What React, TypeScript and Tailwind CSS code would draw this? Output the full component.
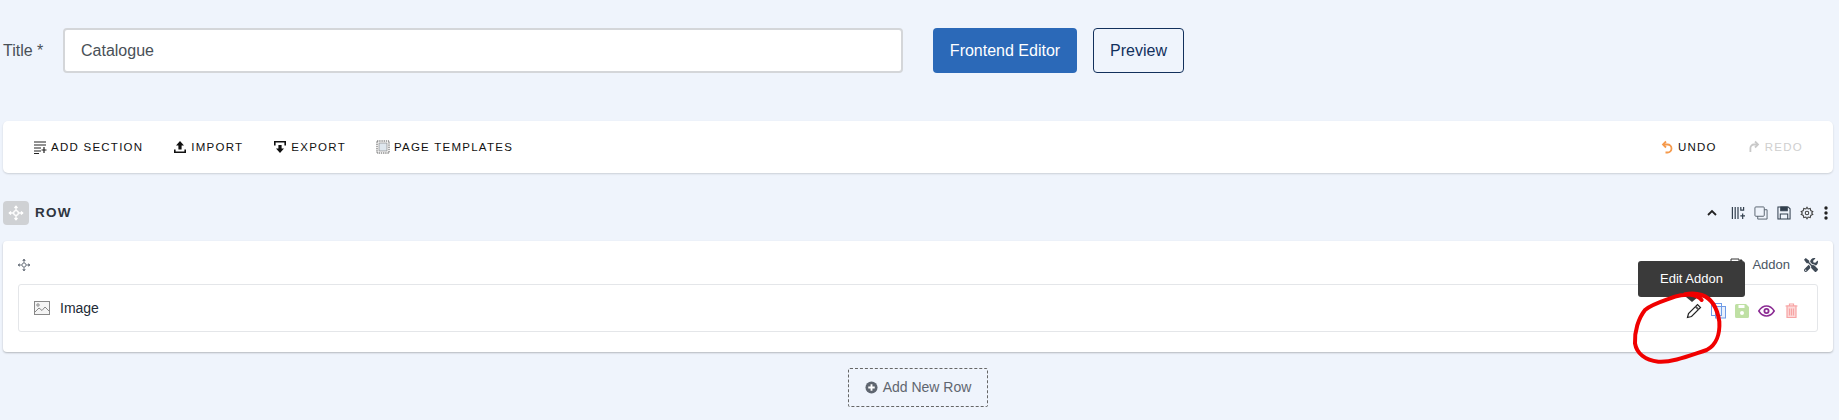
import React from "react";
import { FaTools } from "react-icons/fa";

const sans = "font-['Liberation_Sans',Arial,sans-serif]";

function MoveIcon({ size, color, stroke = 1.6 }: { size: number; color: string; stroke?: number }) {
  return (
    <svg width={size} height={size} viewBox="0 0 24 24" fill="none" stroke={color} strokeWidth={stroke}>
      <circle cx="12" cy="12" r="3.5" />
      <path d="M12 8.5V2M12 15.5V22M8.5 12H2M15.5 12H22" />
      <path d="M9.8 4.500 12 2l2.200 2.500M9.800 19.500 12 22l2.200-2.500M4.500 9.800 2 12l2.500 2.200M19.500 9.800 22 12l-2.500 2.200" fill={color} />
    </svg>
  );
}

function ToolbarItem({ icon, label, className }: { icon: React.ReactNode; label: string; className?: string }) {
  return (
    <div className={`flex items-center gap-[4px] ${className ?? ""}`}>
      {icon}
      <span className="pt-[1px] text-[11.5px] leading-none tracking-[1.25px]">{label}</span>
    </div>
  );
}

export default function App() {
  return (
    <div className={`relative h-[420px] w-[1839px] overflow-hidden bg-[#eff4fc] ${sans}`}>
      {/* Title row */}
      <div className="h-[28px]" />
      <div className="flex h-[45px] items-center pl-[3px]">
        <label className="w-[60px] text-[16px] text-[#495057]">Title *</label>
        <div className="flex h-[45px] w-[840px] items-center rounded-[4px] border-2 border-[#d4d6d9] bg-white pl-[16px] text-[16px] text-[#495057]">
          Catalogue
        </div>
        <button className="ml-[30px] h-[45px] w-[144px] rounded-[4px] bg-[#2b69b8] text-[16px] text-white">Frontend Editor</button>
        <button className="ml-[16px] h-[45px] w-[91px] rounded-[4px] border border-[#12305c] text-[16px] text-[#12305c]">Preview</button>
      </div>

      {/* Toolbar */}
      <div className="ml-[3px] mr-[6px] mt-[48px] flex h-[52px] items-center justify-between rounded-[5px] bg-white pl-[30px] pr-[30px] text-[#111] shadow-[0_1px_2px_rgba(0,0,0,0.15)]">
        <div className="flex items-center gap-[30px]">
          <ToolbarItem
            label="ADD SECTION"
            icon={
              <svg width="14" height="14" viewBox="0 0 14 14" fill="none" stroke="#222" strokeWidth="1.2">
                <path d="M1 2h12M1 5h12M1 8h7M1 11h7M1 13.500h5M11 7v6M8.500 10h5" />
              </svg>
            }
          />
          <ToolbarItem
            label="IMPORT"
            icon={
              <svg width="14" height="14" viewBox="0 0 14 14" fill="#111">
                <path d="M7 1 11 5.500H8.600V9.500H5.400V5.500H3Z" />
                <path d="M1 9.500h1.600v2h8.800v-2H13v3.500H1Z" />
              </svg>
            }
          />
          <ToolbarItem
            label="EXPORT"
            icon={
              <svg width="14" height="14" viewBox="0 0 14 14" fill="#111">
                <path d="M7 13 11 8.500H8.600V5H5.400V8.500H3Z" />
                <path d="M1 1h12v4.500h-1.600V2.600H2.600v2.900H1Z" />
              </svg>
            }
          />
          <ToolbarItem
            label="PAGE TEMPLATES"
            icon={
              <svg width="14" height="14" viewBox="0 0 14 14" fill="none">
                <rect x="1" y="1" width="12" height="12" stroke="#555" strokeDasharray="1.400 0.800" />
                <rect x="3" y="3" width="8" height="8" fill="#dfe7ee" stroke="#888" strokeWidth="0.7" />
              </svg>
            }
          />
        </div>
        <div className="flex items-center gap-[30px]">
          <ToolbarItem
            label="UNDO"
            icon={
              <svg width="14" height="14" viewBox="0 0 14 14" fill="none" stroke="#f59a4c" strokeWidth="1.8">
                <path d="M6 1.500 3 4.500l3 3" />
                <path d="M3 4.500h4.500a3.600 3.600 0 0 1 0 8H5.500" />
              </svg>
            }
          />
          <ToolbarItem
            className="text-[#cfcfcf]"
            label="REDO"
            icon={
              <svg width="14" height="14" viewBox="0 0 14 14" fill="none" stroke="#c9c9c9" strokeWidth="1.8">
                <path d="M8 1.500 11 4.500l-3 3" />
                <path d="M11 4.500H7a3.600 3.600 0 0 0-3.600 3.600v4" />
              </svg>
            }
          />
        </div>
      </div>

      {/* Row header */}
      <div className="ml-[3px] mr-[6px] mt-[28px] flex h-[24px] items-center justify-between">
        <div className="flex items-center">
          <div className="flex h-[24px] w-[26px] items-center justify-center rounded-[4px] bg-[#cfd1d4]">
            <MoveIcon size={16} color="#ffffff" stroke={2} />
          </div>
          <span className="ml-[6px] text-[13.5px] font-bold tracking-[1.3px] text-[#2f3640]">ROW</span>
        </div>
        <div className="mr-[5px] flex items-center gap-[9px]">
          <svg width="14" height="14" viewBox="0 0 14 14" fill="none" stroke="#222" strokeWidth="1.8" className="mr-[3px]">
            <path d="M3 9l4-4 4 4" />
          </svg>
          <svg width="14" height="14" viewBox="0 0 15 15" fill="none" stroke="#33404f" strokeWidth="1.3">
            <path d="M1.500 1v13M4.500 1v13M7.500 1v13M10.500 1v3.500h3V1M10 10.500h5M12.500 8v6" />
          </svg>
          <svg width="14" height="14" viewBox="0 0 15 15" fill="none" stroke="#55606c" strokeWidth="1">
            <rect x="1" y="1" width="10" height="10" rx="1" />
            <path d="M11 4h3v10H4v-3" />
          </svg>
          <svg width="14" height="14" viewBox="0 0 15 15" fill="none" stroke="#33404f" strokeWidth="1.1">
            <path d="M1 1h11l2 2v11H1Z" />
            <path d="M4 1h7v4H4Z" fill="#33404f" />
            <path d="M3.500 14V8.500h8V14" />
          </svg>
          <svg width="14" height="14" viewBox="0 0 24 24" fill="none" stroke="#444" strokeWidth="1.8">
            <circle cx="12" cy="12" r="3" />
            <path d="M12 2l2 3 3.600-.8.800 3.600 3.600 2-2 2.200 2 2.200-3.600 2-.8 3.600L14 19l-2 3-2-3-3.600.8-.8-3.600-3.600-2 2-2.200-2-2.200 3.600-2 .8-3.600L10 5Z" />
          </svg>
          <svg width="4" height="14" viewBox="0 0 4 14" fill="#222" className="ml-[1px]">
            <circle cx="2" cy="2" r="1.700" />
            <circle cx="2" cy="7" r="1.700" />
            <circle cx="2" cy="12" r="1.700" />
          </svg>
        </div>
      </div>

      {/* Card */}
      <div className="ml-[3px] mr-[6px] mt-[16px] h-[111px] rounded-[4px] bg-white px-[15px] shadow-[0_1px_2px_rgba(0,0,0,0.25)]">
        <div className="flex h-[43px] items-center justify-between pt-[5px]">
          <div className="ml-[-1px]"><MoveIcon size={14} color="#5c6470" stroke={1.4} /></div>
          <div className="flex items-center">
            <svg width="14" height="14" viewBox="0 0 14 14" fill="none" stroke="#333" strokeWidth="1" className="mr-[8px]">
              <path d="M9 1H1v12h12V5M9 1v12M11 1v3M9.500 2.500h3" />
            </svg>
            <span className="text-[13px] text-[#4a5563]">Addon</span>
            <FaTools className="ml-[14px] text-[14px] text-[#3f4a56]" />
          </div>
        </div>
        <div className="flex h-[48px] items-center justify-between rounded-[3px] border border-[#e4e6e9] pl-[15px] pr-[19px]">
          <div className="flex items-center">
            <svg width="16" height="14" viewBox="0 0 16 14" fill="none" stroke="#888">
              <rect x="0.500" y="0.500" width="15" height="13" fill="#f4f4f4" />
              <circle cx="4" cy="4" r="1.200" />
              <path d="M1 11l4-4 3 2.500L11 6l4 4" />
            </svg>
            <span className="ml-[10px] text-[14px] text-[#222b36]">Image</span>
          </div>
          <div className="flex items-center gap-[9px] pt-[5px]">
            <svg width="16" height="16" viewBox="0 0 16 16" fill="none">
              <path d="M1.500 14.500 2.500 10.500 11.500 1.500 14.500 4.500 5.500 13.500Z" fill="#fff" stroke="#222" strokeWidth="1.200" />
              <path d="M9.500 3.500l3 3" stroke="#555" strokeWidth="1.800" />
            </svg>
            <svg width="15" height="16" viewBox="0 0 15 16" fill="none" stroke="#6f9be6" strokeWidth="1">
              <rect x="4.500" y="3.500" width="10" height="11.500" fill="#e9f0fc" />
              <rect x="0.500" y="0.500" width="10" height="12" />
            </svg>
            <svg width="14" height="14" viewBox="0 0 14 14">
              <path d="M0 1.500A1.500 1.500 0 0 1 1.500 0h9.500L14 3v9.500a1.500 1.500 0 0 1-1.500 1.500h-11A1.500 1.500 0 0 1 0 12.500Z" fill="#bfe0a4" />
              <rect x="3.500" y="1" width="6" height="3" fill="#fff" />
              <circle cx="7" cy="9" r="2" fill="#fff" />
            </svg>
            <svg width="17" height="12" viewBox="0 0 17 12" fill="none">
              <path d="M0.800 6C3 2.500 5.500 1 8.500 1s5.500 1.500 7.700 5c-2.200 3.500-4.700 5-7.700 5S3 9.500 0.800 6Z" stroke="#8b2b93" strokeWidth="1.500" />
              <circle cx="8.500" cy="6" r="3" fill="#8b2b93" />
              <circle cx="8.500" cy="6" r="1.200" fill="#fff" />
            </svg>
            <svg width="13" height="15" viewBox="0 0 13 15" fill="none" stroke="#f7a4a4" strokeWidth="1.200" className="ml-[1px]">
              <path d="M0.500 3h12M4.500 3V1h4v2" />
              <path d="M2 3h9v11.500H2z" fill="#fcd9d9" />
              <path d="M4.500 5.500v7M6.500 5.500v7M8.500 5.500v7" />
            </svg>
          </div>
        </div>
      </div>

      {/* Add New Row */}
      <div className="mt-[16px] flex justify-center">
        <button className="ml-[-3px] flex h-[39px] w-[140px] items-center justify-center gap-[5px] rounded-[2px] border border-dashed border-[#666] text-[14px] text-[#5f6670]">
          <svg width="13" height="13" viewBox="0 0 14 14">
            <circle cx="7" cy="7" r="6.500" fill="#5f6670" />
            <path d="M7 3.500v7M3.500 7h7" stroke="#fff" strokeWidth="2" />
          </svg>
          Add New Row
        </button>
      </div>

      {/* Tooltip */}
      <div className="absolute left-[1638px] top-[261px] flex h-[36px] w-[107px] items-center justify-center rounded-[3px] bg-[#3a3a3a] text-[13px] text-white">
        Edit Addon
        <span className="absolute bottom-[-5px] left-1/2 h-0 w-0 -translate-x-1/2 border-x-[6px] border-t-[5px] border-x-transparent border-t-[#3a3a3a]" />
      </div>

      {/* Hand-drawn red circle */}
      <svg className="pointer-events-none absolute left-[1600px] top-[250px]" width="130" height="120" viewBox="0 0 390 360" fill="none">
        <path
          d="M305 150C290 132 255 130 225 140C195 152 160 160 135 180C115 205 103 245 105 280C110 310 135 330 175 335C215 338 265 318 320 300C350 285 360 250 358 215C352 175 335 145 305 135C290 130 270 130 255 133"
          stroke="#f00000"
          strokeWidth="12"
          strokeLinecap="round"
        />
      </svg>
    </div>
  );
}
